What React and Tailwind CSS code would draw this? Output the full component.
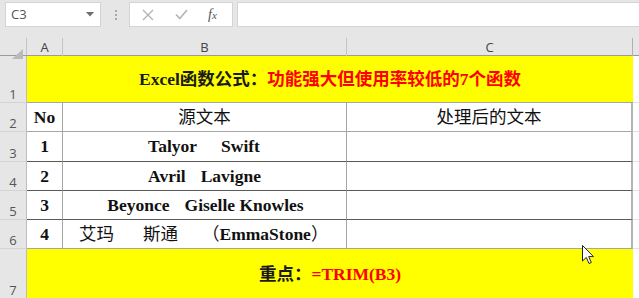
import React from "react";

const SERIF = "font-['Liberation_Serif','Noto_Sans_CJK_SC',serif]";

function RowHead({ n }) {
  return (
    <div className={`flex items-end justify-center border-r border-b border-r-[#bdbdbd] border-b-[#d4d4d4] bg-[#e6e6e6] pb-[1px] text-[13px] leading-none text-[#555] font-['Open_Sans','Liberation_Sans',sans-serif]`}>
      {n}
    </div>
  );
}

function DataRow({ n, h, a, b, c, bottom, bold = true }) {
  return (
    <div className={`grid grid-cols-[27px_36px_284px_286px_1fr] ${h}`}>
      <RowHead n={n} />
      <div className={`flex items-center justify-center border-r border-r-[#a6a6a6] bg-white ${bottom} ${SERIF} text-[17.5px] font-bold text-[#111]`}>
        {a}
      </div>
      <div className={`flex items-center justify-center border-r border-r-[#a6a6a6] bg-white ${bottom} ${SERIF} text-[17.5px] ${bold ? "font-bold" : ""} text-[#111]`}>
        {b}
      </div>
      <div className={`flex items-center justify-center border-r-2 border-r-[#b4b4b4] bg-white ${bottom} ${SERIF} text-[17.5px] text-[#111]`}>
        {c}
      </div>
      <div className="border-b border-b-[#e2e2e2] bg-white" />
    </div>
  );
}

export default function App() {
  return (
    <div className="relative h-[298px] w-[639px] overflow-hidden bg-[#e6e6e6]">
      {/* toolbar */}
      <div className="flex h-[32px] items-start pt-[2px]">
        <div className="ml-[5px] flex h-[25px] w-[96px] items-center justify-between border border-[#d4d4d4] bg-white pl-[5px] pr-[6px]">
          <span className="text-[13px] text-[#555] font-['Open_Sans','Liberation_Sans',sans-serif]">C3</span>
          <svg width="8" height="5" viewBox="0 0 8 5">
            <path d="M0 0 L8 0 L4 4.5 Z" fill="#6e6e6e" />
          </svg>
        </div>
        <div className="ml-[13px] flex h-[25px] w-[4px] flex-col items-center justify-center gap-[2px]">
          <div className="h-[2px] w-[2px] bg-[#a8a8a8]" />
          <div className="h-[2px] w-[2px] bg-[#a8a8a8]" />
          <div className="h-[2px] w-[2px] bg-[#a8a8a8]" />
        </div>
        <div className="ml-[11px] flex h-[25px] w-[104px] items-center border border-[#d4d4d4] bg-white">
          <svg className="ml-[12px]" width="12" height="12" viewBox="0 0 12 12">
            <path d="M1 1 L11 11 M11 1 L1 11" stroke="#b4b4b4" strokeWidth="1.4" />
          </svg>
          <svg className="ml-[21px]" width="13" height="11" viewBox="0 0 13 11">
            <path d="M1 5.5 L4.8 9.5 L12 1" stroke="#b4b4b4" strokeWidth="1.6" fill="none" />
          </svg>
          <span className="ml-[20px] text-[14px] italic text-[#555] font-['Liberation_Serif',serif]">
            f<span className="text-[11px]">x</span>
          </span>
        </div>
        <div className="ml-[4px] h-[25px] flex-1 border border-r-0 border-[#d4d4d4] bg-white" />
      </div>

      {/* column headers */}
      <div className="grid h-[24px] grid-cols-[27px_36px_284px_286px_1fr] border-b border-b-[#9b9b9b] font-['Open_Sans','Liberation_Sans',sans-serif] text-[13px] text-[#444]">
        <div className="relative border-r border-r-[#c4c4c4] my-[5px] mt-[6px]">
          <svg className="absolute bottom-[-4px] right-[3px]" width="11" height="10" viewBox="0 0 11 10">
            <path d="M11 0 L11 10 L0 10 Z" fill="#b9b9b9" />
          </svg>
        </div>
        <div className="mt-[6px] mb-[1px] flex items-center justify-center border-r border-r-[#c4c4c4] pb-[1px]">A</div>
        <div className="mt-[6px] mb-[1px] flex items-center justify-center border-r border-r-[#c4c4c4] pb-[1px]">B</div>
        <div className="mt-[6px] mb-[1px] flex items-center justify-center border-r border-r-[#b0b0b0] pb-[1px]">C</div>
        <div />
      </div>

      {/* row 1 */}
      <div className="grid h-[47px] grid-cols-[27px_606px_1fr]">
        <RowHead n="1" />
        <div className={`flex items-center justify-center border-b border-b-[#a6a6a6] bg-[#ffff00] ${SERIF} text-[17.5px] font-bold`}>
          <span className="text-[#1a1a1a]">Excel函数公式：</span>
          <span className="text-[#ff0000]">功能强大但使用率较低的7个函数</span>
        </div>
        <div className="border-b border-b-[#e2e2e2] bg-white" />
      </div>

      <DataRow n="2" h="h-[29px]" a="No" b={<span className="font-normal">源文本</span>} c="处理后的文本" bottom="border-b border-b-[#a6a6a6]" />
      <DataRow
        n="3"
        h="h-[30px]"
        a="1"
        b={
          <span className="pr-[1px]">
            Talyor<span className="ml-[24px]">Swift</span>
          </span>
        }
        c=""
        bottom="border-b border-b-[#5b5b55]"
      />
      <DataRow
        n="4"
        h="h-[29px]"
        a="2"
        b={
          <span>
            Avril<span className="ml-[15px]">Lavigne</span>
          </span>
        }
        c=""
        bottom="border-b border-b-[#5b5b55]"
      />
      <DataRow
        n="5"
        h="h-[29px]"
        a="3"
        b={
          <span className="pl-[2px]">
            Beyonce<span className="ml-[15px]">Giselle Knowles</span>
          </span>
        }
        c=""
        bottom="border-b border-b-[#5b5b55]"
      />
      <DataRow
        n="6"
        h="h-[29px]"
        a="4"
        b={
          <span className="flex w-full items-center pl-[16px]">
            <span className="font-normal">艾玛</span>
            <span className="ml-[29px] font-normal">斯通</span>
            <span className="ml-[24px] font-normal">（</span>
            <span>EmmaStone</span>
            <span className="font-normal">）</span>
          </span>
        }
        c=""
        bottom="border-b border-b-[#a6a6a6]"
      />

      {/* row 7 */}
      <div className="grid h-[50px] grid-cols-[27px_606px_1fr]">
        <RowHead n="7" />
        <div className={`flex items-center justify-center bg-[#ffff00] pt-[1px] ${SERIF} text-[17.5px] font-bold`}>
          <span className="text-[#1a1a1a]">重点：</span>
          <span className="text-[#ff0000]">=TRIM(B3)</span>
        </div>
        <div className="bg-white" />
      </div>

      {/* mouse cursor */}
      <svg className="absolute left-[582px] top-[245px]" width="13" height="20" viewBox="0 0 13 20">
        <path d="M0.5 0.5 L0.5 16 L4.3 12.4 L7 18.5 L9.3 17.5 L6.7 11.6 L11.5 11.6 Z" fill="#fff" stroke="#222" strokeWidth="1" strokeLinejoin="round" />
      </svg>
    </div>
  );
}
